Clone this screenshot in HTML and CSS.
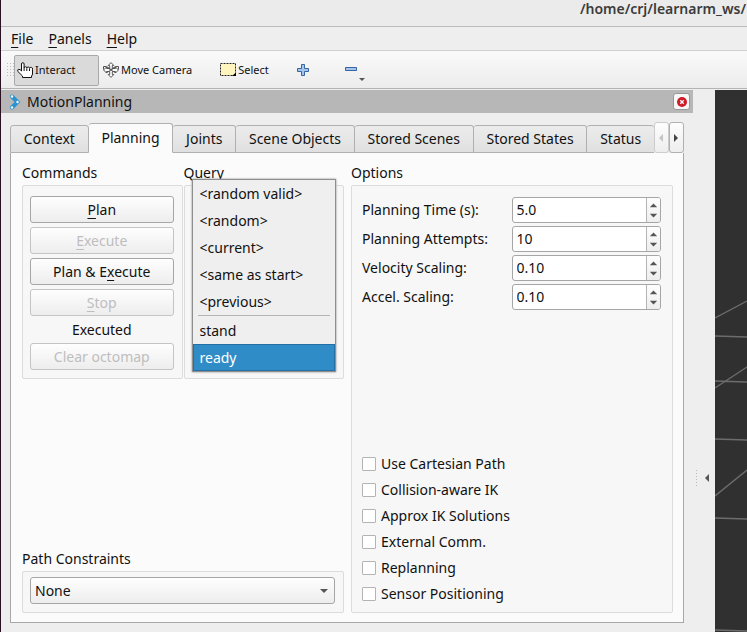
FILE: index.html
```html
<!DOCTYPE html>
<html lang="en">
<head>
    <meta charset="UTF-8">
    <meta name="viewport" content="width=device-width, initial-scale=1.0">
    <title>MotionPlanning</title>
    <link rel="stylesheet" href="styles.css">
</head>
<body>
    <header class="titlebar">/home/crj/learnarm_ws/</header>

    <nav class="menubar">
        <a href="#"><u>F</u>ile</a>
        <a href="#"><u>P</u>anels</a>
        <a href="#"><u>H</u>elp</a>
    </nav>

    <!-- Toolbar -->
    <div class="toolbar">
        <span class="grip"></span>
        <button class="tool active">
            <svg width="16" height="16" viewBox="0 0 16 16"><path d="M4.500 9V2a1.300 1.300 0 0 1 2.600 0V6a1.300 1.300 0 0 1 2.700.2a1.300 1.300 0 0 1 2.700.3a1.300 1.300 0 0 1 3 .7v4.800q0 1-1 2v1.500H5.500v-1.500L.9 9.500Q0 7.500 1.800 7.300Q3.200 7.300 4.500 9M7.100 6v3M9.800 6.500v2.500M12.500 7v2" fill="#fff" stroke="#111"/></svg>
            Interact
        </button>
        <button class="tool">
            <svg width="16" height="16" viewBox="0 0 16 16" fill="#fff" stroke="#555"><path d="M8 .6L10.800 3.500H9.300V6.500H12.500V5L15.400 8L12.500 11V9.500H9.300V12.500H10.800L8 15.400L5.200 12.500H6.700V9.500H3.500V11L.6 8L3.500 5V6.500H6.700V3.500H5.200Z"/><path d="M.5 4.500h3L8 7.500l4.500-3h3M.5 4.500v3M15.500 4.500v3M4 5.500l8 5M12 5.500l-8 5" fill="none"/></svg>
            Move Camera
        </button>
        <button class="tool select-tool">
            <svg width="16" height="14" viewBox="0 0 16 14"><rect x=".5" y=".5" width="15" height="12" fill="#fff6bf" stroke="#222" stroke-dasharray="2 1"/><path d="M16 9.500V13h-4z"/></svg>
            Select
        </button>
        <button class="tool icon-tool" aria-label="Add tool">
            <svg width="12" height="12" viewBox="0 0 12 12"><path d="M4.500.5h3v4h4v3h-4v4h-3v-4h-4v-3h4z" fill="#a5c4e8" stroke="#3465a4"/></svg>
        </button>
        <button class="tool icon-tool minus-tool" aria-label="Remove tool">
            <svg width="22" height="24" viewBox="0 0 22 24"><path d="M.5 9.500h11v3H.5z" fill="#a5c4e8" stroke="#3465a4"/><path d="M14 20h6l-3 3z" fill="#555"/></svg>
        </button>
    </div>

    <main class="workspace">
        <section class="dock">
            <div class="dock-title">
                <svg width="12" height="16" viewBox="0 0 12 16"><path d="M3 2.500L8.500 8L3 13.500" fill="none" stroke="#2a92cf" stroke-width="4" stroke-linecap="round"/><circle cx="3" cy="2.500" r="1.200" fill="#fff"/><circle cx="8.500" cy="8" r="1.200" fill="#fff"/><circle cx="3" cy="13.500" r="1.200" fill="#fff"/></svg>
                <span>MotionPlanning</span>
                <button class="close" aria-label="Close">
                    <svg width="10" height="10" viewBox="0 0 10 10"><circle cx="5" cy="5" r="5" fill="#cf1c28"/><path d="M3.300 3.300l3.400 3.400M6.700 3.300L3.300 6.700" stroke="#fff" stroke-width="1.300"/></svg>
                </button>
            </div>

            <div class="tabs">
                <button class="tab">Context</button>
                <button class="tab current">Planning</button>
                <button class="tab">Joints</button>
                <button class="tab">Scene Objects</button>
                <button class="tab">Stored Scenes</button>
                <button class="tab">Stored States</button>
                <button class="tab last">Status</button>
                <button class="scroll" aria-label="Scroll left" disabled><svg width="4" height="8" viewBox="0 0 4 8"><path d="M4 0v8L0 4z"/></svg></button>
                <button class="scroll" aria-label="Scroll right"><svg width="4" height="8" viewBox="0 0 4 8"><path d="M0 0v8l4-4z"/></svg></button>
            </div>

            <div class="page">
                <div class="left">
                    <div class="pair">
                        <section class="group">
                            <h2>Commands</h2>
                            <div class="box commands">
                                <button class="btn"><u>P</u>lan</button>
                                <button class="btn" disabled><u>E</u>xecute</button>
                                <button class="btn">Plan &amp; E<u>x</u>ecute</button>
                                <button class="btn" disabled><u>S</u>top</button>
                                <p>Executed</p>
                                <button class="btn" disabled>Clear octomap</button>
                            </div>
                        </section>
                        <section class="group query">
                            <h2>Query</h2>
                            <div class="box"></div>
                            <!-- Open goal state list -->
                            <ul class="popup">
                                <li>&lt;random valid&gt;</li>
                                <li>&lt;random&gt;</li>
                                <li>&lt;current&gt;</li>
                                <li>&lt;same as start&gt;</li>
                                <li>&lt;previous&gt;</li>
                                <li class="separator"></li>
                                <li>stand</li>
                                <li class="selected">ready</li>
                            </ul>
                        </section>
                    </div>
                    <section class="group">
                        <h2><label for="constraints">Path Constraints</label></h2>
                        <div class="box constraints">
                            <select id="constraints"><option>None</option></select>
                            <svg class="arrow" width="8" height="4" viewBox="0 0 8 4"><path d="M0 0h8L4 4z" fill="#555"/></svg>
                        </div>
                    </section>
                </div>

                <section class="group options">
                    <h2>Options</h2>
                    <div class="box">
                        <div class="fields">
                            <label for="time">Planning Time (s):</label>
                            <div class="spin"><input id="time" type="text" value="5.0"><svg width="14" height="24" viewBox="0 0 14 24"><path d="M3 9h8L7 5zM3 16h8l-4 4z"/></svg></div>
                            <label for="attempts">Planning Attempts:</label>
                            <div class="spin"><input id="attempts" type="text" value="10"><svg width="14" height="24" viewBox="0 0 14 24"><path d="M3 9h8L7 5zM3 16h8l-4 4z"/></svg></div>
                            <label for="velocity">Velocity Scaling:</label>
                            <div class="spin"><input id="velocity" type="text" value="0.10"><svg width="14" height="24" viewBox="0 0 14 24"><path d="M3 9h8L7 5zM3 16h8l-4 4z"/></svg></div>
                            <label for="accel">Accel. Scaling:</label>
                            <div class="spin"><input id="accel" type="text" value="0.10"><svg width="14" height="24" viewBox="0 0 14 24"><path d="M3 9h8L7 5zM3 16h8l-4 4z"/></svg></div>
                        </div>
                        <div class="checks">
                            <label><input type="checkbox">Use Cartesian Path</label>
                            <label><input type="checkbox">Collision-aware IK</label>
                            <label><input type="checkbox">Approx IK Solutions</label>
                            <label><input type="checkbox">External Comm.</label>
                            <label><input type="checkbox">Replanning</label>
                            <label><input type="checkbox">Sensor Positioning</label>
                        </div>
                    </div>
                </section>
            </div>
        </section>

        <div class="splitter">
            <span class="dots"></span>
            <svg width="4" height="8" viewBox="0 0 4 8"><path d="M4 0v8L0 4z" fill="#555"/></svg>
        </div>

        <!-- 3D view with the ground grid -->
        <svg class="view" viewBox="0 0 32 542" preserveAspectRatio="xMinYMin slice">
            <path d="M0 228L32 211M0 246L32 247M0 298L32 277M0 291L32 292M0 349L32 350M0 406L32 380M0 428L32 429M0 540L32 541" fill="none" stroke="#6c6c6c" stroke-width="1.400"/>
        </svg>
    </main>
</body>
</html>
```
FILE: styles.css
```css
* {
    box-sizing: border-box;
}
body {
    display: flex;
    flex-direction: column;
    min-height: 100vh;
    margin: 0;
    border-left: 1px solid #2b1222;
    background-color: #eeeeee;
    color: #111;
    font-family: "Noto Sans", sans-serif;
    font-size: 14px;
    line-height: 20px;
}
button, input, select {
    margin: 0;
    color: inherit;
    font: inherit;
}
u {
    text-underline-offset: 3px;
}

/* Window header */
.titlebar {
    height: 27px;
    padding-right: 1px;
    border-bottom: 1px solid #bcbcbc;
    background-color: #ebebeb;
    color: #3c3c3c;
    font-weight: 600;
    line-height: 18px;
    text-align: right;
}
.menubar {
    display: flex;
    gap: 15px;
    height: 24px;
    padding: 2px 10px 0;
    border-bottom: 1px solid #d0d0d0;
}
.menubar a {
    color: inherit;
    text-decoration: none;
}
.toolbar {
    display: flex;
    align-items: center;
    height: 38px;
    padding: 1px 0 0 5px;
    border-bottom: 1px solid #b4b4b4;
    background: linear-gradient(#fafafa, #ececec);
}
.grip {
    width: 8px;
    height: 16px;
    background: radial-gradient(#bbb 1px, transparent 1px) 0 0 / 3px 3px;
}
.tool {
    display: flex;
    align-items: center;
    gap: 2px;
    height: 31px;
    padding: 0 3px;
    border: 1px solid transparent;
    border-radius: 2px;
    background: none;
    font-size: 11px;
    white-space: nowrap;
}
.tool.active {
    width: 85px;
    padding: 0 2px;
    border-color: #a9a9a9;
    background-color: #dadada;
}
.select-tool {
    margin-left: 20px;
}
.icon-tool {
    margin-left: 20px;
}
.minus-tool {
    margin-left: 28px;
}

/* Dock */
.workspace {
    display: flex;
    flex: 1;
    padding-top: 1px;
}
.dock {
    display: flex;
    flex: 1;
    flex-direction: column;
    min-width: 0;
}
.dock-title {
    display: flex;
    align-items: center;
    gap: 6px;
    height: 23px;
    padding: 0 3px 0 8px;
    background-color: #b7b7b7;
}
.close {
    display: grid;
    place-items: center;
    width: 17px;
    height: 17px;
    margin-left: auto;
    padding: 0;
    border: 1px solid #999;
    border-radius: 3px;
    background-color: #f8f8f8;
}
.tabs {
    display: flex;
    align-items: flex-end;
    margin: 9px 9px 0;
}
.tab {
    flex: 1 1 auto;
    height: 28px;
    padding: 0;
    border: 1px solid #b0b0b0;
    border-left-width: 0;
    border-radius: 3px 3px 0 0;
    background: linear-gradient(#ececec, #e0e0e0);
    white-space: nowrap;
}
.tab:first-child {
    border-left-width: 1px;
}
.tab.current {
    height: 30px;
    border-bottom-color: #fbfbfb;
    background: #fbfbfb;
}
.tab.last {
    border-right: 0;
}
.scroll {
    display: grid;
    flex: none;
    place-items: center;
    width: 15px;
    height: 31px;
    padding: 0;
    border: 1px solid #b0b0b0;
    border-radius: 3px;
    background: linear-gradient(#fdfdfd, #eee);
    fill: #444;
}
.scroll:disabled {
    border-color: #ccc;
    fill: #c4c4c4;
}
.page {
    display: flex;
    flex: 1;
    gap: 7px;
    margin: 0 9px 9px;
    padding: 10px 10px 9px 11px;
    border: 1px solid #a8a8a8;
    border-top-width: 0;
    background-color: #fbfbfb;
}
.left {
    display: flex;
    flex: 1;
    flex-direction: column;
    justify-content: space-between;
}
.pair {
    display: flex;
    gap: 1px;
}
.group {
    display: flex;
    flex: 1;
    flex-direction: column;
}
.left > .group {
    flex: none;
}
.group h2 {
    margin: 0 0 2px;
    font-size: 14px;
    font-weight: normal;
    line-height: 20px;
}
.box {
    flex: 1;
    border: 1px solid #dcdcdc;
    border-radius: 2px;
    background-color: #f7f7f7;
}
.commands {
    display: flex;
    flex-direction: column;
    gap: 4px;
    padding: 10px 8px 8px 7px;
}
.commands p {
    margin: 0;
    line-height: 19px;
    text-align: center;
}
.btn {
    height: 27px;
    padding: 0;
    border: 1px solid #a6a6a6;
    border-radius: 3px;
    background: linear-gradient(#fefefe, #ededed);
}
.btn:disabled {
    border-color: #c4c4c4;
    color: #bebebe;
}

/* Popup list */
.query {
    position: relative;
}
.popup {
    position: absolute;
    top: 16px;
    left: 8px;
    right: 8px;
    margin: 0;
    padding: 0;
    border: 1px solid #8e8e8e;
    background-color: #efefef;
    box-shadow: 0 0 2px #888;
    list-style: none;
}
.popup li {
    padding: 0 7px;
    line-height: 27px;
}
.popup .separator {
    height: 1px;
    margin: 0 5px 1px;
    background-color: #b4b4b4;
}
.popup .selected {
    padding: 0 6px;
    border: 1px solid #2470a4;
    background-color: #308cc6;
    color: #fff;
    line-height: 25px;
}

.constraints {
    position: relative;
    padding: 5px 8px 8px 7px;
}
.constraints select {
    display: block;
    width: 100%;
    height: 27px;
    padding: 0 4px;
    border: 1px solid #a6a6a6;
    border-radius: 3px;
    appearance: none;
    background: linear-gradient(#fefefe, #ededed);
}
.arrow {
    position: absolute;
    top: 17px;
    right: 15px;
}

/* Options */
.options .box {
    display: flex;
    flex-direction: column;
    justify-content: space-between;
    padding: 11px 11px 5px 10px;
}
.fields {
    display: grid;
    grid-template-columns: 1fr 1fr;
    align-items: center;
    row-gap: 3px;
}
.spin {
    display: flex;
    height: 26px;
    overflow: hidden;
    border: 1px solid #a6a6a6;
    border-radius: 3px;
    background-color: #fff;
}
.spin input {
    flex: 1;
    min-width: 0;
    padding: 0 4px;
    border: 0;
    background: none;
}
.spin svg {
    flex: none;
    border-left: 1px solid #b4b4b4;
    background: linear-gradient(#fdfdfd, #eee);
    fill: #555;
}
.checks label {
    display: flex;
    align-items: center;
    gap: 5px;
    height: 26px;
}
.checks input {
    width: 14px;
    height: 14px;
    border: 1px solid #b4b4b4;
    border-radius: 1px;
    appearance: none;
    background-color: #fff;
}

.splitter {
    display: flex;
    align-items: center;
    gap: 8px;
    width: 22px;
    padding: 234px 0 0 3px;
}
.dots {
    width: 1px;
    height: 16px;
    background: repeating-linear-gradient(#bbb 0 1px, transparent 1px 3px);
}
.view {
    flex: none;
    width: 32px;
    background-color: #303030;
}
```
